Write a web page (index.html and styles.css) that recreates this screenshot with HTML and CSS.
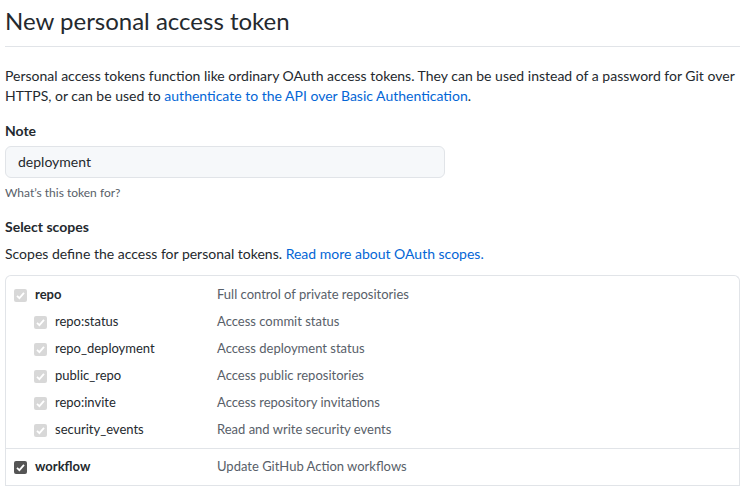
FILE: index.html
```html
<!DOCTYPE html>
<html>
<head>
<meta charset="utf-8">
<link rel="stylesheet" href="styles.css">
</head>
<body>
<div class="page">
  <h1 class="title">New personal access token</h1>
  <p class="intro">Personal access tokens function like ordinary OAuth access tokens. They can be used instead of a password for Git over HTTPS, or can be used to <a class="link" href="#">authenticate to the API over Basic Authentication</a>.</p>

  <div class="field">
    <div class="label">Note</div>
    <div class="input">deployment</div>
    <div class="hint">What’s this token for?</div>
  </div>

  <div class="field scopes-field">
    <div class="label">Select scopes</div>
    <p class="scopes-desc">Scopes define the access for personal tokens. <a class="link" href="#">Read more about OAuth scopes.</a></p>
  </div>

  <div class="scopes">
    <div class="group">
      <div class="row">
        <div class="name main"><span class="cb disabled"><svg viewBox="0 0 13 13"><path d="M3 6.8 L5.4 9.1 L10 3.9" /></svg></span>repo</div>
        <div class="desc">Full control of private repositories</div>
      </div>
      <div class="row">
        <div class="name sub"><span class="cb disabled"><svg viewBox="0 0 13 13"><path d="M3 6.8 L5.4 9.1 L10 3.9" /></svg></span>repo:status</div>
        <div class="desc">Access commit status</div>
      </div>
      <div class="row">
        <div class="name sub"><span class="cb disabled"><svg viewBox="0 0 13 13"><path d="M3 6.8 L5.4 9.1 L10 3.9" /></svg></span>repo_deployment</div>
        <div class="desc">Access deployment status</div>
      </div>
      <div class="row">
        <div class="name sub"><span class="cb disabled"><svg viewBox="0 0 13 13"><path d="M3 6.8 L5.4 9.1 L10 3.9" /></svg></span>public_repo</div>
        <div class="desc">Access public repositories</div>
      </div>
      <div class="row">
        <div class="name sub"><span class="cb disabled"><svg viewBox="0 0 13 13"><path d="M3 6.8 L5.4 9.1 L10 3.9" /></svg></span>repo:invite</div>
        <div class="desc">Access repository invitations</div>
      </div>
      <div class="row">
        <div class="name sub"><span class="cb disabled"><svg viewBox="0 0 13 13"><path d="M3 6.8 L5.4 9.1 L10 3.9" /></svg></span>security_events</div>
        <div class="desc">Read and write security events</div>
      </div>
    </div>
    <div class="group last">
      <div class="row">
        <div class="name main"><span class="cb checked"><svg viewBox="0 0 13 13"><path d="M3 6.8 L5.4 9.1 L10 3.9" /></svg></span>workflow</div>
        <div class="desc">Update GitHub Action workflows</div>
      </div>
    </div>
  </div>
</div>
</body>
</html>
```

FILE: styles.css
```css
html, body {
  margin: 0;
  padding: 0;
  background: #fff;
}
body {
  font-family: Lato, "Open Sans", "Liberation Sans", sans-serif;
  font-size: 14px;
  color: #24292e;
  line-height: 1.5;
}
.page {
  padding: 0 8px 0 5px;
}
.title {
  margin: 0;
  padding: 4px 0 8px;
  font-size: 24px;
  font-weight: 400;
  line-height: 1.4;
  border-bottom: 1px solid #e1e4e8;
}
.intro {
  margin: 19px 0 14px;
  line-height: 20px;
}
.link {
  color: #0366d6;
  text-decoration: none;
}
.field {
  margin-bottom: 14px;
}
.field.scopes-field {
  margin-bottom: 11px;
}
.label {
  font-weight: 700;
  margin-bottom: 5px;
}
.scopes-field .label {
  margin-bottom: 6px;
}
.input {
  width: 440px;
  box-sizing: border-box;
  height: 32px;
  padding: 5px 12px;
  background: #f6f8fa;
  border: 1px solid #e1e4e8;
  border-radius: 6px;
  line-height: 20px;
}
.hint {
  font-size: 12px;
  color: #586069;
  margin-top: 6px;
}
.scopes-desc {
  margin: 0;
}
.scopes {
  border: 1px solid #e1e4e8;
  border-radius: 6px;
  border-bottom: none;
  border-bottom-left-radius: 0;
  border-bottom-right-radius: 0;
}
.group {
  padding: 6px 0 4px;
  border-bottom: 1px solid #e1e4e8;
}
.group.last {
  padding: 5px 0 4px;
}
.row {
  display: flex;
  height: 27px;
  align-items: center;
  font-size: 13px;
}
.name {
  width: 211px;
  display: flex;
  align-items: center;
  box-sizing: border-box;
}
.name.main {
  padding-left: 8px;
  font-weight: 700;
}
.name.sub {
  padding-left: 28px;
}
.cb {
  width: 13px;
  height: 13px;
  border-radius: 2px;
  margin-right: 8px;
  display: inline-flex;
}
.cb svg {
  width: 13px;
  height: 13px;
  fill: none;
  stroke: #fff;
  stroke-width: 1.8;
}
.cb.disabled {
  background: #d8d8d8;
}
.cb.checked {
  background: #555;
}
.desc {
  color: #586069;
}
```
